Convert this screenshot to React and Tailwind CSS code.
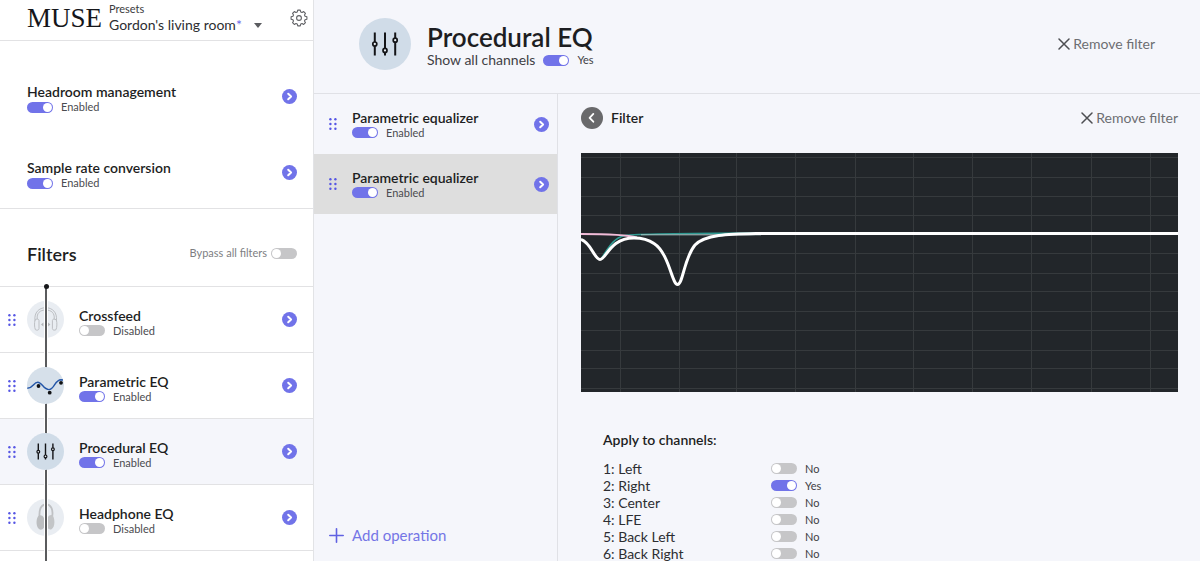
import React from "react";

function Toggle({ label, on, className = "" }) {
  return (
    <input
      type="checkbox"
      role="switch"
      aria-label={label}
      defaultChecked={on}
      className={`flex h-[11px] w-[26px] shrink-0 cursor-pointer appearance-none items-center rounded-full bg-[#c6c6c8] px-px before:block before:size-[9px] before:rounded-full before:bg-white checked:justify-end checked:bg-[#7173e9] ${className}`}
    />
  );
}

function OpenButton({ label }) {
  return (
    <button type="button" aria-label={label} className="size-[15px] shrink-0 cursor-pointer">
      <svg viewBox="0 0 15 15" className="size-full">
        <circle cx="7.5" cy="7.5" r="7.5" fill="#7173e9" />
        <path d="M6.2 4.7 9.1 7.5 6.2 10.3" fill="none" stroke="#fff" strokeWidth="2" strokeLinecap="round" strokeLinejoin="round" />
      </svg>
    </button>
  );
}

function DragHandle() {
  return (
    <svg viewBox="0 0 8 12" className="h-3 w-2 shrink-0" fill="#5656e4" aria-hidden="true">
      {[1.2, 6, 10.8].map((y) => (
        <g key={y}>
          <circle cx="1.4" cy={y} r="1.2" />
          <circle cx="6.4" cy={y} r="1.2" />
        </g>
      ))}
    </svg>
  );
}

function NamedToggle({ title, on, className = "" }) {
  return (
    <div className={`flex min-w-0 flex-1 flex-col ${className}`}>
      <span className="text-sm leading-4 font-semibold text-[#1d1e22]">{title}</span>
      <label className="flex h-[14px] items-center gap-2 text-[11px] leading-[14px] text-[#4b4c50]">
        <Toggle label={title} on={on} />
        {on ? "Enabled" : "Disabled"}
      </label>
    </div>
  );
}

function GearIcon() {
  const points = [];
  for (let i = 0; i < 8; i++) {
    const base = i * 45;
    [[-16, 6.3], [-9, 8], [9, 8], [16, 6.3]].forEach(([offset, radius]) => {
      const angle = ((base + offset) * Math.PI) / 180;
      points.push(`${(9 + radius * Math.sin(angle)).toFixed(2)},${(9 - radius * Math.cos(angle)).toFixed(2)}`);
    });
  }
  return (
    <svg viewBox="0 0 18 18" className="size-[18px]" fill="none" stroke="#606165" strokeWidth="1.1" strokeLinejoin="round">
      <polygon points={points.join(" ")} />
      <circle cx="9" cy="9" r="2.4" />
    </svg>
  );
}

function SlidersIcon({ className }) {
  return (
    <svg viewBox="0 0 52 52" className={className}>
      <circle cx="26" cy="26" r="26" fill="#d0dce8" />
      <g fill="#e8eef4" stroke="#141518" strokeWidth="1.7">
        <path d="M15.8 14.5v23M26 14.5v23M36.2 14.5v23" strokeWidth="2" />
        <circle cx="15.8" cy="26" r="2" />
        <circle cx="26" cy="32.4" r="2" />
        <circle cx="36.2" cy="22.2" r="2" />
      </g>
    </svg>
  );
}

function SmallSlidersIcon() {
  return (
    <svg viewBox="0 0 37 37" className="size-[37px]">
      <circle cx="18.5" cy="18.5" r="18.5" fill="#d0dce8" />
      <g fill="#e8eef4" stroke="#141518" strokeWidth="1.2">
        <path d="M11.3 10.5v16M18.5 10.5v16M25.9 10.5v16" strokeWidth="1.400" />
        <circle cx="11.3" cy="18.8" r="1.4" />
        <circle cx="18.5" cy="23.4" r="1.4" />
        <circle cx="25.9" cy="16.2" r="1.4" />
      </g>
    </svg>
  );
}

function WaveIcon() {
  return (
    <svg viewBox="0 0 37 37" className="size-[37px]">
      <circle cx="18.5" cy="18.5" r="18.5" fill="#d6e0ea" />
      <path d="M.3 21.3C6 21.3 6.500 15.200 10.800 15.200 15 15.200 16.500 22.600 22 22.600 27.500 22.600 27.600 12.800 34 12.800L36 13" fill="none" stroke="#2456a8" strokeWidth="1.4" />
      <g fill="#111215">
        <circle cx="11.500" cy="19" r="1.900" />
        <circle cx="22.700" cy="25.700" r="1.900" />
        <circle cx="34" cy="15.800" r="1.900" />
      </g>
    </svg>
  );
}

function OpenHeadphonesIcon() {
  return (
    <svg viewBox="0 0 37 37" className="size-[37px]">
      <circle cx="18.5" cy="18.5" r="18.5" fill="#e9edf2" />
      <g fill="none" stroke="#bcbfc3" strokeWidth="1">
        <path d="M8 19.500C7 11.500 12 6.700 18.700 6.700S30.400 11.500 29.400 19.500" />
        <path d="M10.200 18C9.600 12 13 9 18.700 9S27.800 12 27.200 18" />
        <path d="M8 19c1.800-1.500 4-1 4 .5v8c0 1.800-2.200 2-3.600 1.200C7.300 26 7.300 22 8 19z" />
        <path d="M29.400 19c-1.800-1.500-4-1-4 .5v8c0 1.800 2.200 2 3.600 1.200 1.100-2.700 1.100-6.700.4-9.700z" />
      </g>
      <path d="M14 23.500l2.400-2v4zM23.400 23.500l-2.400-2v4z" fill="#b2b5b9" />
    </svg>
  );
}

function SolidHeadphonesIcon() {
  return (
    <svg viewBox="0 0 37 37" className="size-[37px]">
      <circle cx="18.5" cy="18.5" r="18.5" fill="#e9edf2" />
      <path d="M12.500 18C12 10 14 6 18.500 5.500 23.500 5 26.500 10 25.200 17.500" fill="none" stroke="#bfc1c4" strokeWidth="1.800" />
      <path d="M12 16.500c3.500-1.200 6 2.500 6 8 0 5-3.500 7.500-6 5.500-3.500-2.500-3-12 0-13.500z" fill="#bcbec0" />
      <path d="M25 16c-3-.8-5.500 2.500-5.500 8 0 5 2.500 7.300 5 6.200 4-2 3.600-12.500.5-14.200z" fill="#c3c5c7" />
    </svg>
  );
}

function CloseIcon() {
  return (
    <svg viewBox="0 0 12 12" className="size-3" fill="none" stroke="#4d4e52" strokeWidth="1.500" strokeLinecap="round">
      <path d="M1 1l10 10M11 1 1 11" />
    </svg>
  );
}

function RemoveButton() {
  return (
    <button type="button" className="flex cursor-pointer items-center gap-[3px] text-sm leading-4 text-[#6d6e72]">
      <CloseIcon />
      Remove filter
    </button>
  );
}

const filters = [
  { name: "Crossfeed", on: false, icon: <OpenHeadphonesIcon /> },
  { name: "Parametric EQ", on: true, icon: <WaveIcon /> },
  { name: "Procedural EQ", on: true, selected: true, icon: <SmallSlidersIcon /> },
  { name: "Headphone EQ", on: false, icon: <SolidHeadphonesIcon /> },
];

function Sidebar() {
  return (
    <aside className="flex w-[314px] shrink-0 flex-col border-r border-[#e2e3e6] bg-white">
      <header className="flex h-[41px] shrink-0 items-start border-b border-[#e2e2e4] pr-[5px] pl-[27px]">
        <span className="w-[82px] pt-[2px] font-['Liberation_Serif',serif] text-[27px] leading-8 text-[#15161a]">MUSE</span>
        <div className="flex flex-1 flex-col pt-[2px]">
          <label htmlFor="preset" className="text-[11px] leading-[14px] text-[#3b3c40]">Presets</label>
          <div className="flex items-center text-sm leading-[18px] text-[#2d2e32]">
            <select id="preset" className="cursor-pointer appearance-none bg-transparent leading-[18px]">
              <option>Gordon's living room</option>
            </select>
            <span className="text-[#6a6be8]">*</span>
            <svg viewBox="0 0 8 5" className="ml-3 h-[5px] w-2" fill="#5b5c60" aria-hidden="true">
              <path d="M0 0h8L4 5z" />
            </svg>
          </div>
        </div>
        <button type="button" aria-label="Settings" className="mt-[9px] cursor-pointer">
          <GearIcon />
        </button>
      </header>

      <section className="flex h-[168px] shrink-0 flex-col gap-3 border-b border-[#e2e2e4] pt-[23px] pr-4 pl-[27px]">
        {["Headroom management", "Sample rate conversion"].map((title) => (
          <div key={title} className="flex h-16 items-center">
            <NamedToggle title={title} on className="pt-[6px]" />
            <OpenButton label={title} />
          </div>
        ))}
      </section>

      <div className="flex h-[77px] shrink-0 items-center justify-between pt-3 pr-4 pl-[27px]">
        <h2 className="text-lg font-semibold text-[#1d1e22]">Filters</h2>
        <label className="flex items-center gap-1 text-[11px] text-[#7d7e82]">
          Bypass all filters
          <Toggle label="Bypass all filters" />
        </label>
      </div>

      <div className="relative isolate flex-1 border-t border-[#e2e2e4]">
        <div className="absolute inset-y-0 left-11 w-1 border-x border-white bg-[#5a5b5d]" />
        <div className="absolute -top-[3px] left-[43px] size-[5px] translate-x-px rounded-full bg-[#17181b]" />
        <ul>
          {filters.map(({ name, on, selected, icon }) => (
            <li
              key={name}
              className={`flex h-[66px] items-center border-b border-[#e2e2e4] pr-4 pl-2 ${selected ? "bg-[#f5f6fb]" : ""}`}
            >
              <DragHandle />
              <span className={`ml-[11px] ${on ? "z-10" : "-z-10"}`}>{icon}</span>
              <NamedToggle title={name} on={on} className="pt-[6px] pl-[15px]" />
              <OpenButton label={name} />
            </li>
          ))}
        </ul>
      </div>
    </aside>
  );
}

function OperationList() {
  return (
    <div className="flex w-[244px] shrink-0 flex-col border-r border-[#e0e1e6]">
      <ul>
        {[false, true].map((selected, i) => (
          <li key={i} className={`flex h-[60px] items-center pr-2 pl-[15px] ${selected ? "bg-[#dedede]" : ""}`}>
            <DragHandle />
            <NamedToggle title="Parametric equalizer" on className="pt-px pl-[15px]" />
            <OpenButton label="Parametric equalizer" />
          </li>
        ))}
      </ul>
      <button type="button" className="mt-auto mb-[17px] ml-[15px] flex cursor-pointer items-center gap-2 self-start text-[15px] leading-[18px] text-[#7475e6]">
        <svg viewBox="0 0 15 15" className="size-[15px]" fill="none" stroke="#6061e2" strokeWidth="1.600" strokeLinecap="round">
          <path d="M7.500 .8v13.400M.8 7.500h13.400" />
        </svg>
        Add operation
      </button>
    </div>
  );
}

function ResponseGraph() {
  const columns = [40, 99, 156, 215, 275, 333, 392, 451, 511, 570];
  const rows = [4, 24, 43, 62, 81, 100, 120, 138, 158, 177, 197, 215, 235];
  return (
    <svg viewBox="0 0 597 239" className="block h-auto w-full bg-[#22262a]" role="img" aria-label="Frequency response">
      <g fill="#363a3d">
        {columns.map((x) => <rect key={x} x={x - 1} width="1" height="239" />)}
        {rows.map((y) => <rect key={y} y={y} width="597" height="1" />)}
      </g>
      <g fill="none">
        <path d="M20 106C29 92 33 85 44 82.500 60 80.300 100 80.300 190 80" stroke="#2f9a92" strokeWidth="1.500" />
        <path d="M60 81.800H180" stroke="#a9c4c2" strokeWidth="1" />
        <path d="M0 81C30 81 46 81.800 56 84.500" stroke="#f2bcd8" strokeWidth="2" />
        <path
          d="M0 86.500C10 89.500 13.500 106.500 19 106.500 25.500 106.500 28.500 85 53 85 62 85 68 87 73 90.500 88 100 91 131.500 96.500 131.500 102 131.500 103 105 114 92 124 81.500 147 81 175 80.500H597"
          stroke="#fff"
          strokeWidth="3"
        />
      </g>
    </svg>
  );
}

const channels = ["Left", "Right", "Center", "LFE", "Back Left", "Back Right"];

function FilterPanel() {
  return (
    <section className="min-w-0 flex-1 pt-3 pr-[22px] pl-[23px]">
      <div className="flex h-[23px] items-center">
        <button type="button" aria-label="Back" className="size-[22px] cursor-pointer">
          <svg viewBox="0 0 23 23" className="size-full">
            <circle cx="11.500" cy="11.500" r="11.500" fill="#69696b" />
            <path d="M12.900 7.200 9 11.300l3.900 4.100" fill="none" stroke="#fff" strokeWidth="1.900" strokeLinecap="round" strokeLinejoin="round" />
          </svg>
        </button>
        <h2 className="ml-2 flex-1 text-sm leading-4 font-semibold text-[#1d1e22]">Filter</h2>
        <RemoveButton />
      </div>
      <div className="mt-6">
        <ResponseGraph />
      </div>
      <fieldset className="mt-10 ml-[22px]">
        <legend className="text-sm leading-4 font-semibold text-[#1d1e22]">Apply to channels:</legend>
        <div className="mt-3">
          {channels.map((name, i) => {
            const on = name === "Right";
            return (
              <label key={name} className="flex h-[17px] items-center text-[#2d2e32]">
                <span className="w-[168px] text-sm leading-[17px]">{`${i + 1}: ${name}`}</span>
                <Toggle label={name} on={on} />
                <span className="ml-2 text-[11px] leading-[17px] text-[#3f4044]">{on ? "Yes" : "No"}</span>
              </label>
            );
          })}
        </div>
      </fieldset>
    </section>
  );
}

export default function App() {
  return (
    <div className="flex h-screen min-h-[561px] overflow-hidden bg-[#f5f6fb] font-[Lato,sans-serif]">
      <Sidebar />
      <main className="flex min-w-0 flex-1 flex-col">
        <header className="flex h-[94px] shrink-0 items-center border-b border-[#e0e1e6] pr-[45px] pb-[5px] pl-[45px]">
          <SlidersIcon className="size-[52px]" />
          <div className="flex-1 pt-1 pl-4">
            <h1 className="text-[26px] leading-7 font-semibold text-[#1d1e22]">Procedural EQ</h1>
            <label className="flex items-center gap-2 text-sm leading-[18px] text-[#3f4044]">
              Show all channels
              <Toggle label="Show all channels" on />
              <span className="text-[11px]">Yes</span>
            </label>
          </div>
          <RemoveButton />
        </header>
        <div className="flex min-h-0 flex-1">
          <OperationList />
          <FilterPanel />
        </div>
      </main>
    </div>
  );
}
